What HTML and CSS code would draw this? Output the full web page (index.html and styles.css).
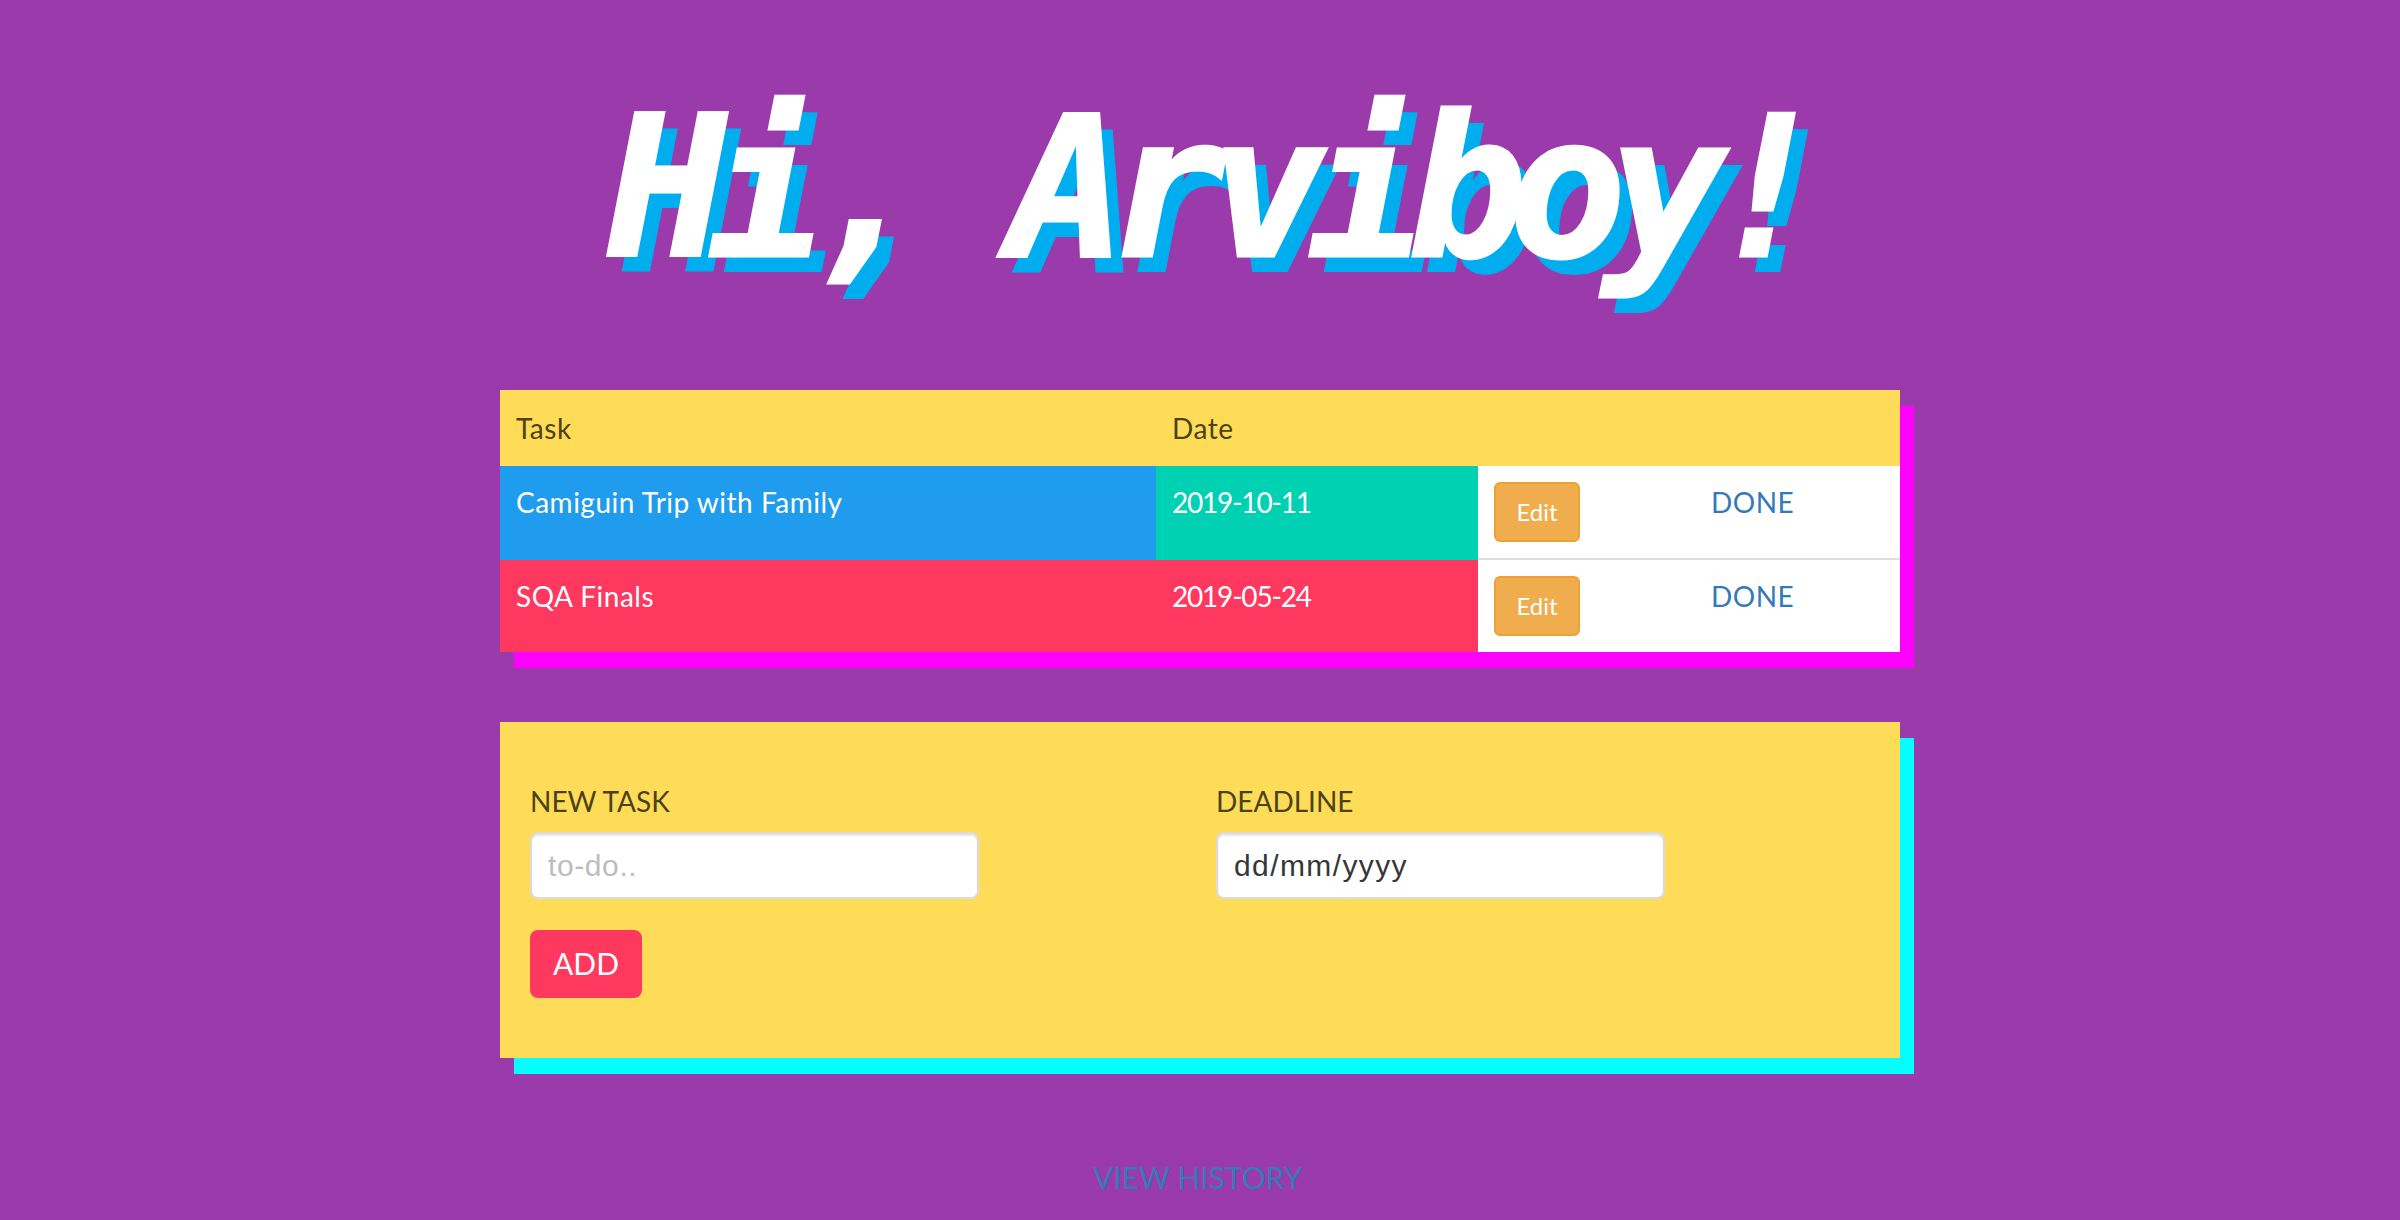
FILE: index.html
```html
<!DOCTYPE html>
<html lang="en">
<head>
<meta charset="utf-8">
<title>Hi, Arviboy!</title>
<link rel="stylesheet" href="styles.css">
</head>
<body>
<h1 class="greeting">Hi, Arviboy!</h1>
<main class="wrap">
  <table class="tasks">
    <thead>
      <tr><th class="col-task">Task</th><th class="col-date">Date</th><th class="col-edit"></th><th class="col-done"></th></tr>
    </thead>
    <tbody>
      <tr class="row-first">
        <td class="cell-blue">Camiguin Trip with Family</td>
        <td class="cell-teal cell-day">2019-10-11</td>
        <td class="cell-white cell-edit"><button class="btn-edit" type="button">Edit</button></td>
        <td class="cell-white"><a class="link-done" href="#">DONE</a></td>
      </tr>
      <tr class="row-second">
        <td class="cell-red">SQA Finals</td>
        <td class="cell-red cell-day">2019-05-24</td>
        <td class="cell-white cell-edit"><button class="btn-edit" type="button">Edit</button></td>
        <td class="cell-white"><a class="link-done" href="#">DONE</a></td>
      </tr>
    </tbody>
  </table>
  <form class="panel">
    <div class="fields">
      <div class="field">
        <label class="label" for="task">NEW TASK</label>
        <input class="input" id="task" type="text" placeholder="to-do..">
      </div>
      <div class="field">
        <label class="label" for="deadline">DEADLINE</label>
        <div class="input input-date" id="deadline">dd/mm/yyyy</div>
      </div>
    </div>
    <button class="btn-add" type="button">ADD</button>
  </form>
  <a class="history" href="#">VIEW HISTORY</a>
</main>
</body>
</html>
```
FILE: styles.css
```css
* { box-sizing: border-box; }
html, body { margin: 0; height: 100%; }
body {
  background: #9b3aab;
  font-family: "Lato", "Liberation Sans", sans-serif;
  font-size: 28px;
  overflow: hidden;
}
.greeting {
  margin: 0;
  height: 390px;
  padding: 70px 0 0 17px;
  text-align: center;
  color: #fff;
  font-family: "DejaVu Sans Mono", monospace;
  font-weight: 700;
  font-style: italic;
  font-size: 196px;
  line-height: 236px;
  letter-spacing: -18px;
  white-space: pre;
  -webkit-text-stroke: 3px #fff;
  text-shadow: 14px 16px 0 #00aeef;
}
.wrap { width: 1400px; margin-left: 500px; }
.tasks {
  width: 1400px;
  border-collapse: separate;
  border-spacing: 0;
  table-layout: fixed;
  box-shadow: 14px 16px 0 #f0f;
}
.col-task { width: 656px; }
.col-date { width: 322px; }
.col-edit { width: 217px; }
.col-done { width: 205px; }
.tasks th {
  height: 76px;
  padding: 0 16px;
  background: #ffdc58;
  color: #4c4219;
  font-weight: 400;
  text-align: left;
  letter-spacing: .5px;
}
.tasks td { padding: 16px; vertical-align: top; line-height: 40px; color: #fff; letter-spacing: .5px; }
.tasks .cell-day { letter-spacing: -1.2px; }
.row-first td { height: 94px; }
.row-second td { height: 92px; }
.cell-blue { background: #209cee; }
.cell-teal { background: #00d1b2; }
.cell-red { background: #ff3860; }
.tasks .cell-white { background: #fff; }
.row-first .cell-white { border-bottom: 2px solid #ddd; }
.tasks .cell-edit { line-height: 0; }
.btn-edit {
  width: 86px;
  height: 60px;
  padding: 0 0 2px;
  border: 2px solid #eea236;
  border-radius: 6px;
  background: #f0ad4e;
  color: #fff;
  font: 400 24px "Lato", sans-serif;
}
.link-done { color: #337ab7; text-decoration: none; }
.panel {
  height: 336px;
  margin-top: 70px;
  padding: 62px 30px 0;
  background: #ffdc58;
  box-shadow: 14px 16px 0 #0ff;
}
.fields { display: flex; gap: 237px; }
.field { display: flex; flex-direction: column; width: 449px; }
.label { color: #4c4219; line-height: 34px; margin-bottom: 14px; }
.input {
  width: 449px;
  height: 67px;
  padding: 0 16px;
  border: 2px solid #dbdbdb;
  border-radius: 8px;
  background: #fff;
  box-shadow: inset 0 2px 2px rgba(10, 10, 10, .1);
  font: 400 30px "Liberation Sans", sans-serif;
  letter-spacing: 1.4px;
  color: #363636;
}
.input::placeholder { color: #bdbdbd; letter-spacing: .6px; }
.input-date { display: flex; align-items: center; }
.btn-add {
  display: block;
  width: 112px;
  height: 68px;
  margin-top: 31px;
  padding: 0 0 3px;
  border: 0;
  border-radius: 8px;
  background: #ff3860;
  color: #fff;
  font: 400 30px "Lato", sans-serif;
}
.history {
  display: block;
  width: 209px;
  margin: 99px 0 0 593px;
  color: #337ab7;
  font-size: 30px;
  line-height: 40px;
  white-space: nowrap;
  text-decoration: none;
}
```
